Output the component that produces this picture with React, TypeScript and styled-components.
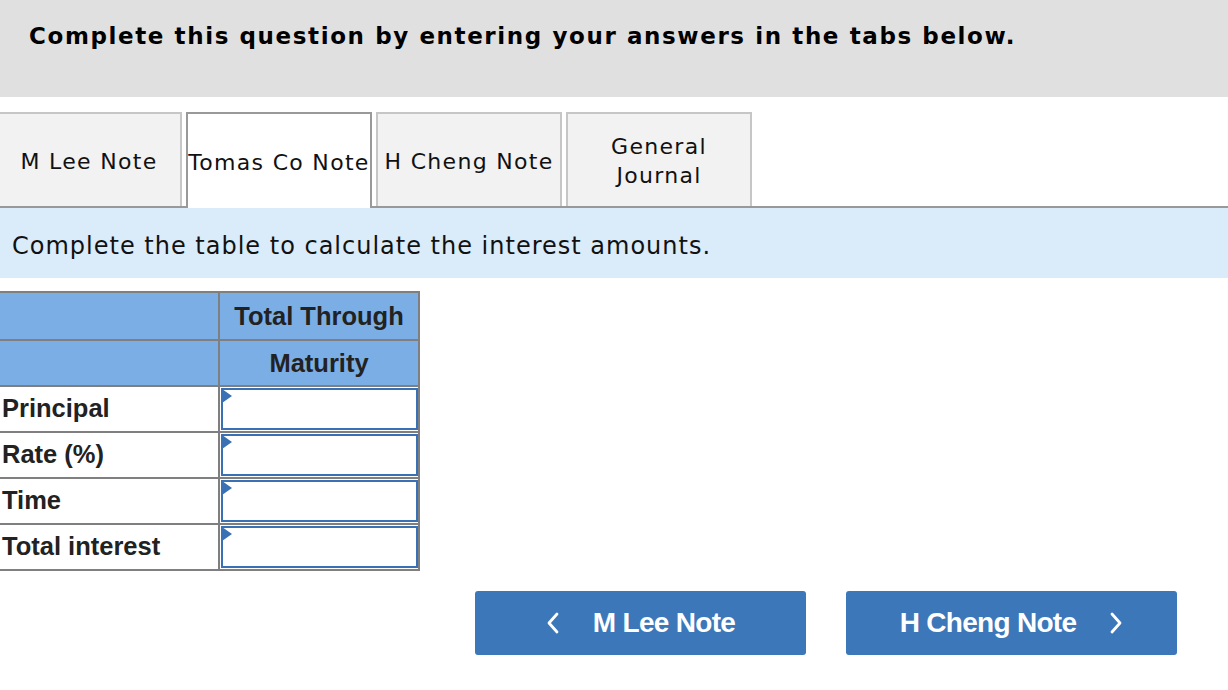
import React from "react";
import styled, {createGlobalStyle} from "styled-components";

const GlobalStyle = createGlobalStyle`
	html, body {
		margin: 0;
		padding: 0;
		background: #ffffff;
		overflow: hidden;
	}
	body {
		font-family: "DejaVu Sans", Verdana, sans-serif;
		color: #111111;
	}
`;

const Page = styled.div`
	width: 1228px;
	height: 690px;
	display: flex;
	flex-direction: column;
`;

const Banner = styled.div`
	height: 97px;
	background: #e0e0e0;
	padding: 23px 0 0 29px;
	box-sizing: border-box;
	font-size: 23px;
	letter-spacing: 1.6px;
	font-weight: bold;
	color: #000000;
`;

const TabBar = styled.div`
	display: flex;
	gap: 4px;
	margin-top: 15px;
	border-bottom: 2px solid #999999;
	height: 96px;
	box-sizing: border-box;
`;

const Tab = styled.div<{active?: boolean}>`
	width: 186px;
	box-sizing: border-box;
	display: flex;
	align-items: center;
	justify-content: center;
	text-align: center;
	font-size: 22px;
	letter-spacing: 1.3px;
	line-height: 29px;
	color: #111111;
	background: ${(p) => (p.active ? "#ffffff" : "#f2f2f2")};
	border: 2px solid ${(p) => (p.active ? "#999999" : "#c6c6c6")};
	border-bottom: none;
	margin-bottom: ${(p) => (p.active ? "-2px" : "0")};
	padding-top: 2px;
	white-space: nowrap;

	&:first-child {
		margin-left: -4px;
	}
`;

const Instruction = styled.div`
	height: 70px;
	background: #daebf9;
	display: flex;
	align-items: center;
	padding: 5px 0 0 12px;
	box-sizing: border-box;
	font-size: 24px;
	letter-spacing: 1px;
	color: #111111;
`;

const Grid = styled.table`
	margin-top: 13px;
	width: 419px;
	table-layout: fixed;
	border-collapse: collapse;
	font-family: "Liberation Sans", Arial, sans-serif;
	font-weight: bold;
	font-size: 25.5px;
	color: #222222;
`;

const HeadCell = styled.th<{label?: boolean}>`
	background: #7aaee4;
	border: 2px solid #7f7f7f;
	border-left: ${(p) => (p.label ? "none" : "2px solid #7f7f7f")};
	padding: 0;
	text-align: center;
	font-weight: bold;
`;

const HeadRow = styled.tr<{h: number}>`
	height: ${(p) => p.h}px;
`;

const BodyRow = styled.tr`
	height: 46px;
`;

const LabelCol = styled.col`
	width: 219px;
`;

const ValueCol = styled.col`
	width: 200px;
`;

const LabelCell = styled.td`
	border: 2px solid #7f7f7f;
	border-left: none;
	padding: 0 0 2px 2px;
	text-align: left;
	white-space: nowrap;
`;

const InputCell = styled.td`
	border: 2px solid #7f7f7f;
	padding: 0;
`;

const Field = styled.div`
	position: relative;
	height: 42px;
	margin: 0 0 0 1px;
	border: 2px solid #3a71b4;
	box-sizing: border-box;
	background: #ffffff;
`;

const Flag = styled.span`
	position: absolute;
	left: -1px;
	top: -1px;
	width: 0;
	height: 0;
	border-top: 7px solid transparent;
	border-bottom: 7px solid transparent;
	border-left: 10px solid #3a71b4;
`;

const Nav = styled.div`
	display: flex;
	justify-content: flex-end;
	gap: 40px;
	padding-right: 51px;
	margin-top: 20px;
`;

const NavButton = styled.button`
	width: 331px;
	height: 64px;
	border: none;
	border-radius: 3px;
	background: #3b77b9;
	color: #ffffff;
	display: flex;
	align-items: center;
	justify-content: center;
	gap: 33px;
	font-family: "Liberation Sans", Arial, sans-serif;
	font-weight: bold;
	font-size: 28px;
	letter-spacing: -0.7px;
	padding: 0;
	cursor: pointer;
`;

const Chevron = ({dir}: {dir: "left" | "right"}) => (
	<svg width="14" height="24" viewBox="0 0 14 24">
		<path
			d={dir === "left" ? "M11 3 L3 12 L11 21" : "M3 3 L11 12 L3 21"}
			fill="none"
			stroke="#ffffff"
			strokeWidth={2.8}
			strokeLinecap="round"
			strokeLinejoin="round"
		/>
	</svg>
);

const rows = ["Principal", "Rate (%)", "Time", "Total interest"];

export default function App() {
	return (
		<Page>
			<GlobalStyle />
			<Banner>Complete this question by entering your answers in the tabs below.</Banner>
			<TabBar>
				<Tab>M Lee Note</Tab>
				<Tab active>Tomas Co Note</Tab>
				<Tab>H Cheng Note</Tab>
				<Tab>
					General
					<br />
					Journal
				</Tab>
			</TabBar>
			<Instruction>Complete the table to calculate the interest amounts.</Instruction>
			<Grid>
				<colgroup>
					<LabelCol />
					<ValueCol />
				</colgroup>
				<thead>
					<HeadRow h={48}>
						<HeadCell label />
						<HeadCell>Total Through</HeadCell>
					</HeadRow>
					<HeadRow h={46}>
						<HeadCell label />
						<HeadCell>Maturity</HeadCell>
					</HeadRow>
				</thead>
				<tbody>
					{rows.map((r) => (
						<BodyRow key={r}>
							<LabelCell>{r}</LabelCell>
							<InputCell>
								<Field>
									<Flag />
								</Field>
							</InputCell>
						</BodyRow>
					))}
				</tbody>
			</Grid>
			<Nav>
				<NavButton>
					<Chevron dir="left" />
					<span>M Lee Note</span>
				</NavButton>
				<NavButton>
					<span>H Cheng Note</span>
					<Chevron dir="right" />
				</NavButton>
			</Nav>
		</Page>
	);
}
